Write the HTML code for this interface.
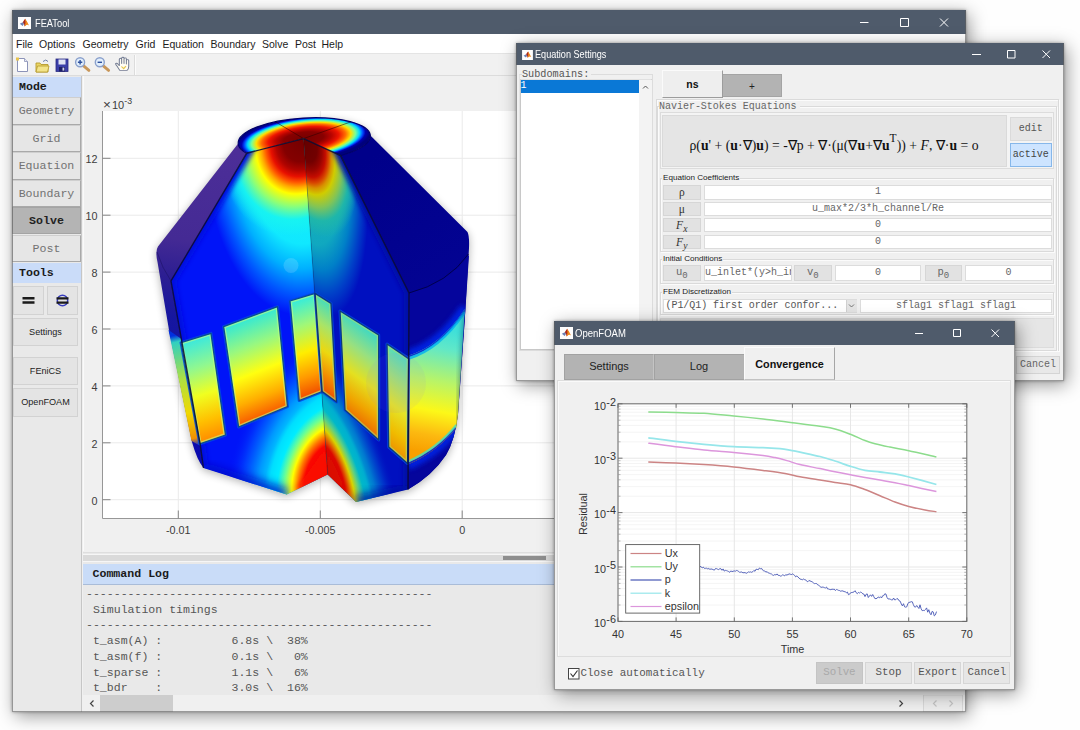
<!DOCTYPE html>
<html>
<head>
<meta charset="utf-8">
<title>FEATool</title>
<style>
*{box-sizing:border-box;margin:0;padding:0}
html,body{width:1080px;height:730px;overflow:hidden;background:#fefefe}
body{position:relative;font-family:"Liberation Sans",sans-serif;font-size:11px;color:#222}
.abs{position:absolute}
.win{position:absolute;background:#f0f0f0;box-shadow:3px 4px 17px rgba(0,0,0,.4),0 0 3px rgba(0,0,0,.35)}
.win::after{content:"";position:absolute;left:0;top:0;right:0;bottom:0;border:1px solid rgba(96,96,96,.6);border-top-color:rgba(79,91,107,.6);pointer-events:none}
.tb{position:absolute;left:0;top:0;right:0;background:#4f5b6b;color:#fff}
.tb .ttl{position:absolute;font-size:10.6px;line-height:12px;white-space:nowrap;transform:scaleX(.84);transform-origin:0 50%}
.ico{position:absolute;width:13px;height:12px;background:#fff}
.ctl{position:absolute;top:0;height:100%}
.mono{font-family:"Liberation Mono",monospace}
.serif{font-family:"Liberation Serif",serif}
.btn{position:absolute;background:#e4e4e4;border:1px solid #d2d2d2;color:#555;text-align:center;white-space:nowrap;overflow:hidden}
.sb{position:absolute;left:0;width:69px;background:#e6e6e6;border:1px solid #cfcfcf;border-right:1px solid #a9a9a9;border-bottom:1px solid #a9a9a9;color:#727272;text-align:center;font-family:"Liberation Mono",monospace;font-size:11.6px;white-space:nowrap}
.lbl{position:absolute;left:0;width:69px;background:#cadcf9;font-family:"Liberation Mono",monospace;font-weight:bold;font-size:11.6px;color:#1a1a1a;padding-left:7px}
.tk{position:absolute;font-size:11.3px;color:#3a3a3a;white-space:nowrap}
.inp{position:absolute;background:#fff;border:1px solid #dcdcdc;font-family:"Liberation Mono",monospace;font-size:10px;color:#666;text-align:center;white-space:nowrap;overflow:hidden}
.cl{position:absolute;background:#e2e2e2;border:1px solid #d6d6d6;text-align:center;color:#555}
.grp{position:absolute;border:1px solid #dadada;box-shadow:inset 1px 1px 0 #fbfbfb,1px 1px 0 #fbfbfb}
.gl{position:absolute;background:#f0f0f0;font-size:8.1px;color:#222;white-space:nowrap;padding:0 1px;line-height:10px}
</style>
</head>
<body>

<!-- ================= MAIN WINDOW ================= -->
<div class="win" id="main" style="left:12px;top:10px;width:954px;height:702px">
  <div class="tb" style="height:24px">
    <svg class="abs" style="left:6px;top:7px" width="13" height="12" viewBox="0 0 13 12"><rect width="13" height="12" fill="#fdfdfd"/><path d="M1.8 6.8l3-1.6 1.3 1.6-1.5 2.2z" fill="#6a7fb4"/><path d="M4.8 5.2q1.6-2.6 2.4-3.4 1 1.6 1.6 4.4l-2.2 3.2-.6-2.6z" fill="#a8281c"/><path d="M7.2 1.8q1.8 2.6 3.8 6.6-1.4-.8-2.6-.4l-1.8 1.4q1.4-3 .6-7.6z" fill="#f08a1c"/></svg>
    <div class="ttl" style="left:22.5px;top:6.5px;transform:scaleX(.875)">FEATool</div>
    <svg class="ctl" style="right:0;width:110px" viewBox="0 0 110 24"><path d="M4 12.5h8.5M44.5 8.5h8v8h-8zM84 8.5l8 8M92 8.5l-8 8" fill="none" stroke="#fff" stroke-width="1"/></svg>
  </div>
  <div class="abs" id="menubar" style="left:0;top:24px;width:954px;height:19px;background:#fff;font-size:10.5px;color:#1c1c1c;line-height:20px">
    <span class="abs" style="left:4px">File</span><span class="abs" style="left:27px">Options</span><span class="abs" style="left:70.5px">Geometry</span><span class="abs" style="left:123.5px">Grid</span><span class="abs" style="left:150.5px">Equation</span><span class="abs" style="left:198.5px">Boundary</span><span class="abs" style="left:250px">Solve</span><span class="abs" style="left:283px">Post</span><span class="abs" style="left:309.5px">Help</span>
  </div>
  <div class="abs" id="toolbar" style="left:0;top:43px;width:954px;height:23px;background:#f1f1f1;border-top:1px solid #e4e4e4;border-bottom:1px solid #dcdcdc">
    <svg class="abs" style="left:0;top:0" width="140" height="22" viewBox="0 0 140 22">
      <!-- new -->
      <path d="M5.5 4.5h7l3 3v10h-10z" fill="#fff" stroke="#8c93b8" stroke-width="1"/><path d="M12.5 4.5v3h3" fill="#e6e9f5" stroke="#8c93b8" stroke-width=".8"/><rect x="4" y="3.5" width="3" height="3" fill="#e8c34a"/>
      <!-- open -->
      <path d="M24 9h4l1 1.5h7v7.5h-12z" fill="#e9d566" stroke="#b59a2c" stroke-width=".9"/><path d="M25.5 12h11.5l-1.5 6h-11.5z" fill="#f3e48a" stroke="#b59a2c" stroke-width=".8"/><path d="M31 7.5q3-3 5 0" fill="none" stroke="#6d7ea8" stroke-width="1"/>
      <!-- save -->
      <rect x="44" y="5" width="12" height="12.5" fill="#3b3fa8" stroke="#2a2c80" stroke-width=".8"/><rect x="46.5" y="5.5" width="7" height="5" fill="#dfe3f3"/><rect x="47" y="13" width="6" height="4.5" fill="#1d1f66"/><rect x="50.5" y="13.6" width="1.8" height="3" fill="#cfd3ea"/>
      <!-- zoom in -->
      <path d="M71.3 11.6l5.6 4.8" stroke="#c8975a" stroke-width="2.9" stroke-linecap="round"/><circle cx="68.1" cy="8.3" r="4.5" fill="#e2effc" stroke="#8aa0cc" stroke-width="1.4"/><path d="M65.9 8.3h4.4M68.1 6.1v4.4" stroke="#2d4f9c" stroke-width="1.4"/>
      <!-- zoom out -->
      <path d="M91 11.6l5.6 4.8" stroke="#c8975a" stroke-width="2.9" stroke-linecap="round"/><circle cx="87.8" cy="8.3" r="4.5" fill="#e2effc" stroke="#8aa0cc" stroke-width="1.4"/><path d="M85.6 8.3h4.4" stroke="#2d4f9c" stroke-width="1.4"/>
      <!-- hand -->
      <g transform="translate(110 10) scale(1.12 1) translate(-110 -10)"><path d="M108,16.4 L105.5,12 Q103.8,10 104.5,9.3 Q105.5,8.8 106.5,10.2 L107.6,11.6 V5.4 Q107.7,4.3 108.7,4.3 Q109.7,4.3 109.7,5.4 V9.5 V4.3 Q109.8,3.3 110.8,3.3 Q111.8,3.3 111.8,4.3 V9.5 V4.9 Q111.9,3.9 112.9,3.9 Q113.9,3.9 113.9,4.9 V10 V6.6 Q114,5.6 115,5.6 Q116,5.6 116,6.6 V12.5 Q116,15 114.5,16.4 Z" fill="#fffdf4" stroke="#717a92" stroke-width=".9" stroke-linejoin="round"/><path d="M109.5 12.5l2 2.2l2-2.6" fill="none" stroke="#e6c84e" stroke-width="1.1"/></g>
      <path d="M122.5 1v20" stroke="#dcdcdc" stroke-width="1"/><path d="M123.5 1v20" stroke="#fbfbfb" stroke-width="1"/>
    </svg>
  </div>
  <div class="abs" id="side" style="left:0;top:66px;width:70px;height:636px;background:#e9e9e9;border-right:1px solid #c6c6c6">
    <div class="lbl" style="top:1px;height:20px;line-height:20px">Mode</div>
    <div class="sb" style="top:21px;height:28px;line-height:26px">Geometry</div>
    <div class="sb" style="top:49px;height:27px;line-height:25px">Grid</div>
    <div class="sb" style="top:76px;height:28px;line-height:26px">Equation</div>
    <div class="sb" style="top:104px;height:27px;line-height:25px">Boundary</div>
    <div class="sb" style="top:131px;height:27px;line-height:25px;background:#b4b4b4;border-color:#a4a4a4;color:#222;font-weight:bold">Solve</div>
    <div class="sb" style="top:159px;height:27px;line-height:25px">Post</div>
    <div class="lbl" style="top:187px;height:20px;line-height:20px">Tools</div>
    <div class="btn" style="left:1px;top:210px;width:31px;height:29px"></div>
    <div class="btn" style="left:35px;top:210px;width:31px;height:29px"></div>
    <svg class="abs" style="left:0;top:208px" width="70" height="34" viewBox="0 0 70 34">
      <path d="M10.5 14.2h12M10.5 18.5h12" stroke="#1a1a1a" stroke-width="2.4"/>
      <circle cx="50.5" cy="16.5" r="5.2" fill="none" stroke="#3a3fc0" stroke-width="1.5"/>
      <path d="M44.5 14.3h12M44.5 18.6h12" stroke="#1a1a1a" stroke-width="2.2"/>
    </svg>
    <div class="btn" style="left:1px;top:242px;width:65px;height:28px;line-height:26px;font-size:9.1px;color:#1c1c1c">Settings</div>
    <div class="btn" style="left:1px;top:281px;width:65px;height:28px;line-height:26px;font-size:9.1px;color:#1c1c1c">FEniCS</div>
    <div class="btn" style="left:1px;top:312px;width:65px;height:29px;line-height:27px;font-size:9.1px;color:#1c1c1c">OpenFOAM</div>
  </div>
  <div class="abs" id="plotpanel" style="left:71px;top:66px;width:883px;height:477px;background:#f0f0f0;border-left:1px solid #fafafa"></div>
  <!--PLOT-START--><svg class="abs" style="left:0;top:0" width="954" height="702" viewBox="12 10 954 702"><style>.t{font-family:"Liberation Sans",sans-serif;font-size:10.8px;fill:#3c3c3c}</style><defs><radialGradient id="gTop" gradientUnits="userSpaceOnUse" cx="0" cy="0" r="67" gradientTransform="translate(303.6 138.6) rotate(-3.4) scale(1 0.325)"><stop offset="0" stop-color="#760000"/><stop offset="0.3" stop-color="#880000"/><stop offset="0.42" stop-color="#b80400"/><stop offset="0.53" stop-color="#ee1400"/><stop offset="0.63" stop-color="#ff6c00"/><stop offset="0.71" stop-color="#ffe000"/><stop offset="0.78" stop-color="#78ff98"/><stop offset="0.84" stop-color="#00d8ff"/><stop offset="0.89" stop-color="#0048ff"/><stop offset="0.93" stop-color="#0000b0"/><stop offset="1" stop-color="#00007c"/></radialGradient><radialGradient id="gLP" gradientUnits="userSpaceOnUse" cx="0" cy="0" r="1" gradientTransform="matrix(138 -40 11.8 160 303.6 137)"><stop offset="0" stop-color="#720000"/><stop offset="0.15" stop-color="#840000"/><stop offset="0.2" stop-color="#b00400"/><stop offset="0.24" stop-color="#e81000"/><stop offset="0.275" stop-color="#ff5800"/><stop offset="0.305" stop-color="#ffa800"/><stop offset="0.345" stop-color="#ffff00"/><stop offset="0.42" stop-color="#8cff78"/><stop offset="0.5" stop-color="#18f4f0" stop-opacity="0.9"/><stop offset="0.6" stop-color="#18f4f0" stop-opacity="0"/></radialGradient><radialGradient id="gLP2" gradientUnits="userSpaceOnUse" cx="0" cy="0" r="1" gradientTransform="matrix(98 -28 13 176 303.6 137)"><stop offset="0" stop-color="#18f4f0"/><stop offset="0.6" stop-color="#10e8ff"/><stop offset="0.74" stop-color="#00b0ff"/><stop offset="0.88" stop-color="#0058ff"/><stop offset="1" stop-color="#0014f8"/></radialGradient><radialGradient id="gRP" gradientUnits="userSpaceOnUse" cx="0" cy="0" r="1" gradientTransform="matrix(90 50 11.8 160 303.6 137)"><stop offset="0" stop-color="#620000"/><stop offset="0.15" stop-color="#720000"/><stop offset="0.2" stop-color="#980400"/><stop offset="0.24" stop-color="#c40c00"/><stop offset="0.275" stop-color="#d84800"/><stop offset="0.305" stop-color="#d89000"/><stop offset="0.345" stop-color="#d0cc00"/><stop offset="0.42" stop-color="#80c458"/><stop offset="0.5" stop-color="#20b8a8" stop-opacity="0.9"/><stop offset="0.6" stop-color="#20b8a8" stop-opacity="0"/></radialGradient><radialGradient id="gRP2" gradientUnits="userSpaceOnUse" cx="0" cy="0" r="1" gradientTransform="matrix(63 35 13 176 303.6 137)"><stop offset="0" stop-color="#20b8a8"/><stop offset="0.6" stop-color="#10a8c0"/><stop offset="0.74" stop-color="#0080c8"/><stop offset="0.88" stop-color="#0040c8"/><stop offset="1" stop-color="#0010c0"/></radialGradient><radialGradient id="gLI" gradientUnits="userSpaceOnUse" cx="0" cy="0" r="1" gradientTransform="matrix(-64 31.4 -6.3 -86 327.7 477)"><stop offset="0" stop-color="#f00000"/><stop offset="0.36" stop-color="#fa0800"/><stop offset="0.46" stop-color="#ff7800"/><stop offset="0.56" stop-color="#ffff00"/><stop offset="0.68" stop-color="#70ff90"/><stop offset="0.8" stop-color="#00ecff"/><stop offset="0.92" stop-color="#00e0ff" stop-opacity="0.9"/><stop offset="1" stop-color="#00d0ff" stop-opacity="0"/></radialGradient><radialGradient id="gLI2" gradientUnits="userSpaceOnUse" cx="0" cy="0" r="1" gradientTransform="matrix(-104 51 -10.3 -140 327.7 477)"><stop offset="0" stop-color="#00ecff"/><stop offset="0.52" stop-color="#00e0ff"/><stop offset="0.68" stop-color="#0098ff"/><stop offset="0.84" stop-color="#0048ff" stop-opacity="0.8"/><stop offset="1" stop-color="#0014f8" stop-opacity="0"/></radialGradient><radialGradient id="gRI" gradientUnits="userSpaceOnUse" cx="0" cy="0" r="1" gradientTransform="matrix(50 48.8 -6.3 -86 327.7 477)"><stop offset="0" stop-color="#d00000"/><stop offset="0.36" stop-color="#dc0800"/><stop offset="0.46" stop-color="#e06800"/><stop offset="0.56" stop-color="#d8d400"/><stop offset="0.68" stop-color="#60d080"/><stop offset="0.8" stop-color="#00b8c8"/><stop offset="0.92" stop-color="#00b0d0" stop-opacity="0.9"/><stop offset="1" stop-color="#00a8d0" stop-opacity="0"/></radialGradient><radialGradient id="gRI2" gradientUnits="userSpaceOnUse" cx="0" cy="0" r="1" gradientTransform="matrix(80 78 -10.3 -140 327.7 477)"><stop offset="0" stop-color="#00b8c8"/><stop offset="0.52" stop-color="#00b0d0"/><stop offset="0.68" stop-color="#0078d0"/><stop offset="0.84" stop-color="#0038cc" stop-opacity="0.8"/><stop offset="1" stop-color="#0010c0" stop-opacity="0"/></radialGradient><linearGradient id="gRO" gradientUnits="userSpaceOnUse" x1="380" y1="150" x2="470" y2="300"><stop offset="0" stop-color="#00008a"/><stop offset="1" stop-color="#040494"/></linearGradient><linearGradient id="gBand" gradientUnits="userSpaceOnUse" x1="447" y1="330" x2="425" y2="452"><stop offset="0" stop-color="#40e0d8"/><stop offset="0.15" stop-color="#60e8c8"/><stop offset="0.42" stop-color="#b8f468"/><stop offset="0.66" stop-color="#fcf818"/><stop offset="0.86" stop-color="#fcb810"/><stop offset="1" stop-color="#f8a000"/></linearGradient><linearGradient id="gLO" gradientUnits="userSpaceOnUse" x1="220" y1="150" x2="180" y2="460"><stop offset="0" stop-color="#4c2e98"/><stop offset="0.3" stop-color="#442a94"/><stop offset="0.42" stop-color="#2c1e92"/><stop offset="0.55" stop-color="#1616a0"/><stop offset="1" stop-color="#0a0ab0"/></linearGradient><linearGradient id="gLBand" gradientUnits="userSpaceOnUse" x1="172" y1="336" x2="196" y2="446"><stop offset="0" stop-color="#0030e0"/><stop offset="0.06" stop-color="#30d0c0"/><stop offset="0.4" stop-color="#b0e040"/><stop offset="0.7" stop-color="#f0d800"/><stop offset="0.93" stop-color="#f09000"/><stop offset="1" stop-color="#0030e0"/></linearGradient><filter id="b1" x="-30%" y="-30%" width="160%" height="160%"><feGaussianBlur stdDeviation="1"/></filter><filter id="b2" x="-30%" y="-30%" width="160%" height="160%"><feGaussianBlur stdDeviation="2.5"/></filter><filter id="b4" x="-30%" y="-30%" width="160%" height="160%"><feGaussianBlur stdDeviation="4"/></filter><filter id="sh" x="-30%" y="-30%" width="160%" height="160%"><feGaussianBlur stdDeviation="4"/></filter><linearGradient id="gr1" gradientUnits="userSpaceOnUse" x1="181" y1="342.6" x2="212.4" y2="439.7"><stop offset="0" stop-color="#38e8e0"/><stop offset="0.28" stop-color="#90f890"/><stop offset="0.55" stop-color="#f0ff20"/><stop offset="0.8" stop-color="#ffc000"/><stop offset="1" stop-color="#ff8a00"/></linearGradient><linearGradient id="gr2" gradientUnits="userSpaceOnUse" x1="223.6" y1="326.7" x2="259.8" y2="418.6"><stop offset="0" stop-color="#30e8d8"/><stop offset="0.28" stop-color="#98f880"/><stop offset="0.55" stop-color="#ffff10"/><stop offset="0.8" stop-color="#ffae00"/><stop offset="1" stop-color="#f85800"/></linearGradient><linearGradient id="gr3l" gradientUnits="userSpaceOnUse" x1="290" y1="301" x2="321.7" y2="392.7"><stop offset="0" stop-color="#30ece0"/><stop offset="0.28" stop-color="#a0f878"/><stop offset="0.55" stop-color="#ffee00"/><stop offset="0.8" stop-color="#ff9800"/><stop offset="1" stop-color="#f04800"/></linearGradient><linearGradient id="gr3r" gradientUnits="userSpaceOnUse" x1="315.5" y1="292.9" x2="271.4" y2="357.8"><stop offset="0" stop-color="#40dcc0"/><stop offset="0.28" stop-color="#a8e468"/><stop offset="0.55" stop-color="#ecd810"/><stop offset="0.8" stop-color="#f48c00"/><stop offset="1" stop-color="#ec5000"/></linearGradient><linearGradient id="gr4" gradientUnits="userSpaceOnUse" x1="342.3" y1="307.9" x2="292" y2="375.3"><stop offset="0" stop-color="#38d8c8"/><stop offset="0.28" stop-color="#98e080"/><stop offset="0.55" stop-color="#e4e020"/><stop offset="0.8" stop-color="#f0a400"/><stop offset="1" stop-color="#ec6800"/></linearGradient><linearGradient id="gr5" gradientUnits="userSpaceOnUse" x1="388" y1="342.8" x2="336.9" y2="409.2"><stop offset="0" stop-color="#50dcc0"/><stop offset="0.28" stop-color="#a0e078"/><stop offset="0.55" stop-color="#e4e428"/><stop offset="0.8" stop-color="#f0bc00"/><stop offset="1" stop-color="#ec9000"/></linearGradient></defs><rect x="102.5" y="111" width="857.5" height="407.5" fill="#fff"/><path d="M102.5,158.3 H960" stroke="#eaeaea" stroke-width="1"/><path d="M102.5,215.2 H960" stroke="#eaeaea" stroke-width="1"/><path d="M102.5,272.1 H960" stroke="#eaeaea" stroke-width="1"/><path d="M102.5,329 H960" stroke="#eaeaea" stroke-width="1"/><path d="M102.5,385.9 H960" stroke="#eaeaea" stroke-width="1"/><path d="M102.5,442.8 H960" stroke="#eaeaea" stroke-width="1"/><path d="M102.5,499.7 H960" stroke="#eaeaea" stroke-width="1"/><path d="M178.3,111 V518.5" stroke="#eaeaea" stroke-width="1"/><path d="M320.3,111 V518.5" stroke="#eaeaea" stroke-width="1"/><path d="M462.2,111 V518.5" stroke="#eaeaea" stroke-width="1"/><path d="M102.5,111 V518.5 H960" fill="none" stroke="#979797" stroke-width="1"/><path d="M102.5,158.3 h8" stroke="#858585" stroke-width="1"/><text x="97.5" y="163.1" text-anchor="end" class="t">12</text><path d="M102.5,215.2 h8" stroke="#858585" stroke-width="1"/><text x="97.5" y="220" text-anchor="end" class="t">10</text><path d="M102.5,272.1 h8" stroke="#858585" stroke-width="1"/><text x="97.5" y="276.9" text-anchor="end" class="t">8</text><path d="M102.5,329 h8" stroke="#858585" stroke-width="1"/><text x="97.5" y="333.8" text-anchor="end" class="t">6</text><path d="M102.5,385.9 h8" stroke="#858585" stroke-width="1"/><text x="97.5" y="390.7" text-anchor="end" class="t">4</text><path d="M102.5,442.8 h8" stroke="#858585" stroke-width="1"/><text x="97.5" y="447.6" text-anchor="end" class="t">2</text><path d="M102.5,499.7 h8" stroke="#858585" stroke-width="1"/><text x="97.5" y="504.5" text-anchor="end" class="t">0</text><path d="M178.3,518.5 v-8" stroke="#858585" stroke-width="1"/><text x="178.3" y="534.3" text-anchor="middle" class="t">-0.01</text><path d="M320.3,518.5 v-8" stroke="#858585" stroke-width="1"/><text x="320.3" y="534.3" text-anchor="middle" class="t">-0.005</text><path d="M462.2,518.5 v-8" stroke="#858585" stroke-width="1"/><text x="462.2" y="534.3" text-anchor="middle" class="t">0</text><text x="103" y="109.3" class="t"><tspan font-size="13.5">×</tspan><tspan x="112" font-size="11">10</tspan><tspan dy="-5.2" font-size="8.8">-3</tspan></text><g id="model"><path d="M238.2,143.4 L238.6,140.6 L240.1,137.7 L242.8,134.9 L246.4,132.2 L251.1,129.5 L256.7,127.1 L263.1,124.9 L270.2,122.9 L277.8,121.2 L286,119.8 L294.4,118.7 L303,118 L311.7,117.7 L320.2,117.8 L328.4,118.2 L336.2,119 L343.5,120.1 L350.1,121.5 L356,123.3 L360.9,125.4 L364.9,127.7 L367.8,130.2 L369.7,132.8 L370.4,135.6 L467.5,232 Q469.5,236 469,248 L464.5,323 L458,414 Q455,440 446,455 Q432,476 408,489.5 L356,502 L327.7,474.4 L286.7,494.5 L203.5,468 Q197,460 192,442 L169,330 L157.5,262 Q155,251 158,246.5 Z" fill="#000" opacity=".3" filter="url(#sh)" transform="translate(0 2)"/><path d="M303.6,138.6 L340.6,155.6 L347.3,153.6 L353.2,151.4 L358.4,149 L362.8,146.4 L366.2,143.8 L368.6,141.1 L370,138.3 L370.4,135.6 L467.5,232 Q469.5,236 469,248 L464.5,323 L458,414 Q455,440 446,455 Q432,476 408,489.5 L409,293 Z" fill="url(#gRO)"/><path d="M409,293 Q448,283 469,255 L464.5,323 L458,414 Q455,440 446,455 Q432,476 408,489.5 Z" fill="#05059c"/><clipPath id="cBand"><path d="M408.6,355.5 Q440,346 464.8,309 L458,414 L456.3,428 Q437,452 408,464.5 Z"/></clipPath><clipPath id="cRO"><path d="M303.6,138.6 L340.6,155.6 L347.3,153.6 L353.2,151.4 L358.4,149 L362.8,146.4 L366.2,143.8 L368.6,141.1 L370,138.3 L370.4,135.6 L467.5,232 Q469.5,236 469,248 L464.5,323 L458,414 Q455,440 446,455 Q432,476 408,489.5 L409,293 Z"/></clipPath><g clip-path="url(#cRO)"><path d="M408.6,354 Q440,344.5 464.8,307.5" fill="none" stroke="#0028e8" stroke-width="9" filter="url(#b2)" opacity=".9"/><path d="M408,466 Q437,453.5 456.3,429.5" fill="none" stroke="#0028e8" stroke-width="8" filter="url(#b2)" opacity=".9"/></g><path d="M408.6,355.5 Q440,346 464.8,309 L458,414 L456.3,428 Q437,452 408,464.5 Z" fill="url(#gBand)"/><g clip-path="url(#cBand)"><path d="M408.6,355.5 Q440,346 464.8,309" fill="none" stroke="#0020d0" stroke-width="3.5" opacity=".9"/><path d="M408.6,358.5 Q440,349 464.8,312" fill="none" stroke="#00b0f0" stroke-width="2.5" opacity=".8"/><path d="M408,464.5 Q437,452 456.3,428" fill="none" stroke="#0020d0" stroke-width="3.5" opacity=".9"/><path d="M408,461.5 Q437,449 456.3,425" fill="none" stroke="#40e0c0" stroke-width="2" opacity=".8"/><path d="M467,300 L459,440" stroke="#003060" stroke-width="7" filter="url(#b2)" opacity=".4"/></g><path d="M303.6,138.6 L246.8,153.2 L244.3,151.7 L242.2,150.2 L240.6,148.6 L239.3,146.9 L238.5,145.2 L238.2,143.4 L158,246.5 Q155,251 157.5,262 L169,330 L192,442 Q197,460 203.5,468 L200,443 L171,281 Z" fill="url(#gLO)"/><path d="M168.5,330 L191.5,441 L200.5,446 L181.5,339 Z" fill="url(#gLBand)"/><ellipse cx="304.3" cy="139.5" rx="66.2" ry="21.5" transform="rotate(-3.4 304.3 139.5)" fill="url(#gTop)" stroke="#00006c" stroke-width="1.2"/><path d="M303.6,138.6 L275.2,121.7 M303.6,138.6 L351,121.8" stroke="#300000" stroke-width=".8" opacity=".7"/><clipPath id="cLF"><polygon points="303.6,138.6 246.8,153.2 171,281 200,443 203.5,468 286.7,494.5 327.7,474.4 329.3,475.6 305.2,139.2"/></clipPath><g clip-path="url(#cLF)"><polygon points="303.6,138.6 246.8,153.2 171,281 200,443 203.5,468 286.7,494.5 327.7,474.4" fill="#0014f8"/><rect x="150" y="120" width="200" height="290" fill="url(#gLP2)"/><rect x="150" y="120" width="200" height="290" fill="url(#gLP)"/><path d="M255.9,137.8 L171,281 L200,443 L203.5,468" fill="none" stroke="#0010e0" stroke-width="10" filter="url(#b2)"/><rect x="190" y="330" width="150" height="180" fill="url(#gLI2)"/><rect x="190" y="360" width="150" height="150" fill="url(#gLI)"/><polygon points="327.7,474.4 296,490 326,447" fill="#fa0c00" filter="url(#b2)"/><path d="M203.5,468 L286.7,494.5" fill="none" stroke="#0008c8" stroke-width="12" filter="url(#b4)" opacity=".8"/></g><clipPath id="cRF"><polygon points="303.6,138.6 340.6,155.6 409,293 408,489.5 356,502 327.7,474.4"/></clipPath><g clip-path="url(#cRF)"><polygon points="303.6,138.6 340.6,155.6 409,293 408,489.5 356,502 327.7,474.4" fill="#0010c0"/><rect x="290" y="120" width="140" height="290" fill="url(#gRP2)"/><rect x="290" y="120" width="140" height="290" fill="url(#gRP)"/><path d="M332.4,139.1 L409,293 L408,489" fill="none" stroke="#0008a8" stroke-width="10" filter="url(#b2)"/><rect x="310" y="330" width="110" height="180" fill="url(#gRI2)"/><rect x="310" y="360" width="110" height="150" fill="url(#gRI)"/><polygon points="327.7,474.4 348,494 326,447" fill="#dc0800" filter="url(#b2)"/><path d="M356,502 L408,489.5" fill="none" stroke="#0008a0" stroke-width="12" filter="url(#b4)" opacity=".8"/></g><polygon points="181,342.6 211,333.4 225.5,435 199.8,443.8" fill="#00a0e8" stroke="#0048e8" stroke-width="3" stroke-linejoin="round" opacity=".85"/><clipPath id="cr1"><polygon points="181,342.6 211,333.4 225.5,435 199.8,443.8"/></clipPath><polygon points="181,342.6 211,333.4 225.5,435 199.8,443.8" fill="url(#gr1)"/><polygon points="181,342.6 211,333.4 225.5,435 199.8,443.8" fill="none" stroke="#c0ff80" stroke-width="4" opacity=".6" clip-path="url(#cr1)"/><polygon points="181,342.6 211,333.4 225.5,435 199.8,443.8" fill="none" stroke="#0a4a90" stroke-width="1.3" stroke-linejoin="round"/><polygon points="223.6,326.7 277.5,306.7 287.5,406.5 238.6,427" fill="#00a0e8" stroke="#0048e8" stroke-width="3" stroke-linejoin="round" opacity=".85"/><clipPath id="cr2"><polygon points="223.6,326.7 277.5,306.7 287.5,406.5 238.6,427"/></clipPath><polygon points="223.6,326.7 277.5,306.7 287.5,406.5 238.6,427" fill="url(#gr2)"/><polygon points="223.6,326.7 277.5,306.7 287.5,406.5 238.6,427" fill="none" stroke="#c0ff80" stroke-width="4" opacity=".6" clip-path="url(#cr2)"/><polygon points="223.6,326.7 277.5,306.7 287.5,406.5 238.6,427" fill="none" stroke="#0a4a90" stroke-width="1.3" stroke-linejoin="round"/><polygon points="290,301 315.1,293.4 322.2,391.5 299.2,400.5" fill="#00a0e8" stroke="#0048e8" stroke-width="3" stroke-linejoin="round" opacity=".85"/><clipPath id="cr3l"><polygon points="290,301 315.1,293.4 322.2,391.5 299.2,400.5"/></clipPath><polygon points="290,301 315.1,293.4 322.2,391.5 299.2,400.5" fill="url(#gr3l)"/><polygon points="290,301 315.1,293.4 322.2,391.5 299.2,400.5" fill="none" stroke="#c0ff80" stroke-width="4" opacity=".6" clip-path="url(#cr3l)"/><polygon points="290,301 315.1,293.4 322.2,391.5 299.2,400.5" fill="none" stroke="#0a4a90" stroke-width="1.3" stroke-linejoin="round"/><polygon points="315.1,293.4 331,303.4 336.5,402 322.2,391.5" fill="#00a0e8" stroke="#0048e8" stroke-width="3" stroke-linejoin="round" opacity=".85"/><clipPath id="cr3r"><polygon points="315.1,293.4 331,303.4 336.5,402 322.2,391.5"/></clipPath><polygon points="315.1,293.4 331,303.4 336.5,402 322.2,391.5" fill="url(#gr3r)"/><polygon points="315.1,293.4 331,303.4 336.5,402 322.2,391.5" fill="none" stroke="#a8e070" stroke-width="4" opacity=".6" clip-path="url(#cr3r)"/><polygon points="315.1,293.4 331,303.4 336.5,402 322.2,391.5" fill="none" stroke="#0a3a80" stroke-width="1.3" stroke-linejoin="round"/><polygon points="340,311 378.7,335 378.7,440 345,410" fill="#00a0e8" stroke="#0048e8" stroke-width="3" stroke-linejoin="round" opacity=".85"/><clipPath id="cr4"><polygon points="340,311 378.7,335 378.7,440 345,410"/></clipPath><polygon points="340,311 378.7,335 378.7,440 345,410" fill="url(#gr4)"/><polygon points="340,311 378.7,335 378.7,440 345,410" fill="none" stroke="#a8e070" stroke-width="4" opacity=".6" clip-path="url(#cr4)"/><polygon points="340,311 378.7,335 378.7,440 345,410" fill="none" stroke="#0a3a80" stroke-width="1.3" stroke-linejoin="round"/><polygon points="387,344 408.6,358.6 407.6,463.5 388.7,447" fill="#00a0e8" stroke="#0048e8" stroke-width="3" stroke-linejoin="round" opacity=".85"/><clipPath id="cr5"><polygon points="387,344 408.6,358.6 407.6,463.5 388.7,447"/></clipPath><polygon points="387,344 408.6,358.6 407.6,463.5 388.7,447" fill="url(#gr5)"/><polygon points="387,344 408.6,358.6 407.6,463.5 388.7,447" fill="none" stroke="#a8e070" stroke-width="4" opacity=".6" clip-path="url(#cr5)"/><polygon points="387,344 408.6,358.6 407.6,463.5 388.7,447" fill="none" stroke="#0a3a80" stroke-width="1.3" stroke-linejoin="round"/><path d="M303.6,138.6 L246.8,153.2 L171,281 L200,443 L203.5,468" fill="none" stroke="#0a0a30" stroke-width="1.4" opacity=".85"/><path d="M303.6,138.6 L340.6,155.6 L409,293 L408,489.5" fill="none" stroke="#0a0a30" stroke-width="1.4" opacity=".85"/><path d="M409,293 Q448,283 468.5,254" fill="none" stroke="#00003c" stroke-width="1" opacity=".8"/><path d="M171,281 Q162,268 157,252" fill="none" stroke="#1a1060" stroke-width="1" opacity=".5"/><path d="M303.6,138.6 L327.7,474.4" fill="none" stroke="#200000" stroke-width=".8" opacity=".3"/><circle cx="291" cy="265.5" r="7.5" fill="#fff" opacity=".15"/><circle cx="396" cy="383" r="30" fill="#8868ff" opacity=".07"/></g></svg><!--PLOT-END-->
  <div class="abs" id="cmd" style="left:71px;top:541px;width:883px;height:161px;background:#e9e9e9">
    <div class="abs" style="left:0;top:0;width:883px;height:2px;background:#f0f0f0;border-bottom:1px solid #dedede"></div>
    <div class="abs" style="left:0;top:3px;width:883px;height:8px;background:#dadada;border-top:1px solid #f6f6f6;border-bottom:1px solid #f6f6f6"></div>
    <div class="abs" style="left:420px;top:5px;width:43px;height:4px;background:#8e8e8e"></div>
    <div class="abs mono" style="left:0;top:13px;width:883px;height:21px;background:#c9dcf8;border-bottom:1px solid #a9bcd8;font-weight:bold;font-size:11.6px;line-height:20px;padding-left:9.5px;color:#1a1a1a">Command Log</div>
    <pre class="abs mono" style="left:3px;top:35px;font-size:11.56px;line-height:15.7px;color:#565656;margin:0">--------------------------------------------------
 Simulation timings
--------------------------------------------------
 t_asm(A) :          6.8s \  38%
 t_asm(f) :          0.1s \   0%
 t_sparse :          1.1s \   6%
 t_bdr    :          3.0s \  16%</pre>
    <div class="abs" style="left:0;top:144px;width:883px;height:17px;background:#f0f0f0"></div>
    <div class="abs" style="left:17px;top:144px;width:73px;height:17px;background:#cdcdcd"></div>
    <svg class="abs" style="left:0;top:144px" width="883" height="17" viewBox="0 0 883 17">
      <path d="M10.5 5.5l-3 3 3 3" fill="none" stroke="#444" stroke-width="1.2"/>
      <path d="M816.5 5.5l3 3-3 3" fill="none" stroke="#444" stroke-width="1.2"/>
      <rect x="840.5" y="0" width="39" height="17" fill="#ececec" stroke="#d8d8d8"/>
      <path d="M853.5 5.5l-3 3 3 3M866.5 5.5l3 3-3 3" fill="none" stroke="#c4c4c4" stroke-width="1.2"/>
    </svg>
  </div>
</div>

<!-- ================= EQUATION SETTINGS ================= -->
<div class="win" id="eq" style="left:516px;top:43px;width:548px;height:338px">
  <div class="tb" style="height:22px">
    <svg class="abs" style="left:5.5px;top:6.5px" width="11" height="10" viewBox="0 0 13 12"><rect width="13" height="12" fill="#fdfdfd"/><path d="M1.8 6.8l3-1.6 1.3 1.6-1.5 2.2z" fill="#6a7fb4"/><path d="M4.8 5.2q1.6-2.6 2.4-3.4 1 1.6 1.6 4.4l-2.2 3.2-.6-2.6z" fill="#a8281c"/><path d="M7.2 1.8q1.8 2.6 3.8 6.6-1.4-.8-2.6-.4l-1.8 1.4q1.4-3 .6-7.6z" fill="#f08a1c"/></svg>
    <div class="ttl" style="left:18.5px;top:5px;transform:scaleX(.86)">Equation Settings</div>
    <svg class="ctl" style="right:0;width:110px" viewBox="0 0 110 22"><path d="M18 11.5h9M53.5 7.5h7.5v7.5h-7.5zM88.5 7.5l7.5 7.5M96 7.5l-7.5 7.5" fill="none" stroke="#fff" stroke-width="1"/></svg>
  </div>
  <!-- subdomains -->
  <div class="abs" style="left:2.5px;top:31px;width:134.5px;height:277px;border:1px solid #dcdcdc;border-left-color:#e4e4e4"></div>
  <div class="abs mono" style="left:6px;top:26px;font-size:10.2px;line-height:12px;background:#f0f0f0;color:#555;padding-right:2px">Subdomains:</div>
  <div class="abs" style="left:4px;top:36px;width:132px;height:270.5px;background:#fff;border:1px solid #c8c8c8;border-top-color:#e0e0e0"></div>
  <div class="abs mono" style="left:4.5px;top:37px;width:118.5px;height:12.5px;background:#0a78d6;color:#fff;font-size:10px;line-height:12px">1</div>
  <div class="abs" style="left:123px;top:37px;width:12.5px;height:269px;background:#f3f3f3"></div>
  <svg class="abs" style="left:123px;top:38px" width="13" height="12" viewBox="0 0 13 12"><path d="M4 7.5l2.5-2.5 2.5 2.5" fill="none" stroke="#555" stroke-width="1"/></svg>
  <!-- tabs -->
  <div class="abs" style="left:206px;top:31px;width:60px;height:23px;background:#b3b3b3;border:1px solid #a4a4a4;font-size:10px;text-align:center;line-height:24px;color:#222">+</div>
  <div class="abs" style="left:146px;top:27px;width:61px;height:28px;background:#eeeeee;border:1px solid #fafafa;border-right:1px solid #9c9c9c;border-bottom:1px solid #9c9c9c;font-size:10.5px;font-weight:bold;text-align:center;line-height:26px;color:#111">ns</div>
  <!-- outer tab panel -->
  <div class="grp" style="left:139.5px;top:55.5px;width:403.5px;height:252px"></div>
  <div class="grp" style="left:141px;top:62.5px;width:400px;height:245px"></div>
  <div class="abs mono" style="left:143px;top:57.5px;font-size:10px;line-height:12px;background:#f0f0f0;color:#666;padding-right:3px;letter-spacing:-.02px">Navier-Stokes Equations</div>
  <!-- equation box -->
  <div class="abs" style="left:143.5px;top:69px;width:394px;height:57px;border:1px solid #dcdcdc;background:#f4f4f4"></div>
  <div class="abs" style="left:146px;top:71.5px;width:344.5px;height:52.5px;background:#e5e5e5;border:1px solid #dadada"></div>
  <div class="abs serif" id="eqn" style="left:173.5px;top:93.5px;font-size:13.7px;line-height:18px;color:#111;white-space:nowrap;letter-spacing:.03px">&rho;(<b>u</b>' + (<b>u</b>&middot;&nabla;)<b>u</b>) = -&nabla;p + &nabla;&middot;(&mu;(&nabla;<b>u</b>+&nabla;<b>u</b><sup style="font-size:11.5px;line-height:0;vertical-align:8px">T</sup>)) + <i>F</i>, &nabla;&middot;<b>u</b> = o</div>
  <div class="btn mono" style="left:494px;top:74px;width:41.5px;height:23.5px;line-height:21px;font-size:10px;color:#555;background:#e6e6e6;border-color:#dadada">edit</div>
  <div class="btn mono" style="left:494px;top:100px;width:41.5px;height:23.5px;line-height:21px;font-size:10px;color:#444;background:#cde4ff;border-color:#86b7ea">active</div>
  <!-- coefficients -->
  <div class="grp" style="left:143.5px;top:135px;width:394.5px;height:73.5px"></div>
  <div class="gl" style="left:146px;top:129.5px">Equation Coefficients</div>
  <div class="cl serif" style="left:146.5px;top:142px;width:38.5px;height:14.5px;line-height:12.5px;font-size:11.5px;color:#333;">&rho;</div><div class="inp" style="left:188px;top:142px;width:348px;height:14.5px;line-height:12.5px">1</div><div class="cl serif" style="left:146.5px;top:158.5px;width:38.5px;height:14px;line-height:12px;font-size:11.5px;color:#333;">&mu;</div><div class="inp" style="left:188px;top:158.5px;width:348px;height:14px;line-height:12px">u_max*2/3*h_channel/Re</div><div class="cl serif" style="left:146.5px;top:175px;width:38.5px;height:14px;line-height:12px;font-size:11.5px;color:#333;font-style:italic">F<sub>x</sub></div><div class="inp" style="left:188px;top:175px;width:348px;height:14px;line-height:12px">0</div><div class="cl serif" style="left:146.5px;top:191.5px;width:38.5px;height:14.5px;line-height:12.5px;font-size:11.5px;color:#333;font-style:italic">F<sub>y</sub></div><div class="inp" style="left:188px;top:191.5px;width:348px;height:14.5px;line-height:12.5px">0</div>
  <!-- initial conditions -->
  <div class="grp" style="left:143.5px;top:215.5px;width:394.5px;height:25.5px"></div>
  <div class="gl" style="left:146px;top:210.5px">Initial Conditions</div>
  <div class="cl mono" style="left:146.5px;top:222px;width:38.5px;height:16px;line-height:13px;font-size:10.5px;color:#666">u<sub style="font-size:9px">0</sub></div>
  <div class="inp" style="left:188px;top:222px;width:87.5px;height:16px;line-height:14px;text-align:left;padding-left:0;font-size:10px">u_inlet*(y&gt;h_inlet)</div>
  <div class="cl mono" style="left:277.5px;top:222px;width:38.5px;height:16px;line-height:13px;font-size:10.5px;color:#666">v<sub style="font-size:9px">0</sub></div>
  <div class="inp" style="left:319px;top:222px;width:86px;height:16px;line-height:14px">0</div>
  <div class="cl mono" style="left:408.5px;top:222px;width:37.5px;height:16px;line-height:13px;font-size:10.5px;color:#666">p<sub style="font-size:9px">0</sub></div>
  <div class="inp" style="left:449px;top:222px;width:87px;height:16px;line-height:14px">0</div>
  <!-- FEM -->
  <div class="grp" style="left:143.5px;top:249px;width:394.5px;height:23px"></div>
  <div class="gl" style="left:146px;top:244px">FEM Discretization</div>
  <div class="inp" style="left:147px;top:255.5px;width:194px;height:14px;line-height:12px;text-align:left;padding-left:1.5px;color:#555;letter-spacing:-.05px">(P1/Q1) first order confor...</div>
  <div class="abs" style="left:329.5px;top:256.5px;width:11px;height:12px;background:#e4e4e4;border-left:1px solid #d0d0d0"></div>
  <svg class="abs" style="left:330px;top:257px" width="11" height="12" viewBox="0 0 11 12"><path d="M3 4.5l2.5 2.5 2.5-2.5" fill="none" stroke="#666" stroke-width=".9"/></svg>
  <div class="inp" style="left:344px;top:255.5px;width:192px;height:14px;line-height:12px">sflag1 sflag1 sflag1</div>
  <div class="abs" style="left:143.5px;top:275px;width:394.5px;height:30px;background:#e6e6e6;border:1px solid #dcdcdc"></div>
  <div class="btn mono" style="left:500px;top:313px;width:44px;height:18px;line-height:16px;font-size:10px;color:#666;background:#e8e8e8;border-color:#d4d4d4">Cancel</div>
</div>

<!-- ================= OPENFOAM ================= -->
<div class="win" id="of" style="left:554px;top:321px;width:461px;height:369px">
  <div class="tb" style="height:24px">
    <svg class="abs" style="left:6px;top:6px" width="13" height="12" viewBox="0 0 13 12"><rect width="13" height="12" fill="#fdfdfd"/><path d="M1.8 6.8l3-1.6 1.3 1.6-1.5 2.2z" fill="#6a7fb4"/><path d="M4.8 5.2q1.6-2.6 2.4-3.4 1 1.6 1.6 4.4l-2.2 3.2-.6-2.6z" fill="#a8281c"/><path d="M7.2 1.8q1.8 2.6 3.8 6.6-1.4-.8-2.6-.4l-1.8 1.4q1.4-3 .6-7.6z" fill="#f08a1c"/></svg>
    <div class="ttl" style="left:21px;top:6px;transform:scaleX(.9)">OpenFOAM</div>
    <svg class="ctl" style="right:0;width:110px" viewBox="0 0 110 24"><path d="M10 12.5h8M48.5 8.5h7v7h-7zM86.5 8.5l7.5 7.5M94 8.5l-7.5 7.5" fill="none" stroke="#fff" stroke-width="1"/></svg>
  </div>
  <!--OF-START--><div class="abs" style="left:10px;top:33px;width:90px;height:26px;background:#b3b3b3;border:1px solid #a2a2a2;border-right-color:#c4c4c4;font-size:11px;line-height:23px;text-align:center;color:#1e1e1e">Settings</div><div class="abs" style="left:99.5px;top:33px;width:91px;height:26px;background:#b3b3b3;border:1px solid #a2a2a2;font-size:11px;line-height:23px;text-align:center;color:#1e1e1e">Log</div><div class="abs" style="left:190px;top:26px;width:91px;height:33px;background:#f0f0f0;border:1px solid #fbfbfb;border-right:1px solid #a6a6a6;border-bottom:1px solid #c2c2c2;font-size:10.8px;font-weight:bold;line-height:32px;text-align:center;color:#111">Convergence</div><div class="abs" style="left:2.5px;top:59px;width:454px;height:277px;background:#f0f0f0;border:1px solid #dddddd;box-shadow:inset 1px 1px 0 #fafafa"></div><svg class="abs" style="left:0;top:0" width="461" height="369" viewBox="554 321 461 369"><style>.c{font-family:"Liberation Sans",sans-serif;font-size:10.8px;fill:#333}</style><rect x="618" y="403.8" width="348.8" height="217.6" fill="#fff"/><path d="M618,441.8 H966.8" stroke="#f1f1f1" stroke-width=".8"/><path d="M618,441.8 h2.5M966.8,441.8 h-2.5" stroke="#999" stroke-width=".7"/><path d="M618,432.2 H966.8" stroke="#f1f1f1" stroke-width=".8"/><path d="M618,432.2 h2.5M966.8,432.2 h-2.5" stroke="#999" stroke-width=".7"/><path d="M618,425.4 H966.8" stroke="#f1f1f1" stroke-width=".8"/><path d="M618,425.4 h2.5M966.8,425.4 h-2.5" stroke="#999" stroke-width=".7"/><path d="M618,420.2 H966.8" stroke="#f1f1f1" stroke-width=".8"/><path d="M618,420.2 h2.5M966.8,420.2 h-2.5" stroke="#999" stroke-width=".7"/><path d="M618,415.9 H966.8" stroke="#f1f1f1" stroke-width=".8"/><path d="M618,415.9 h2.5M966.8,415.9 h-2.5" stroke="#999" stroke-width=".7"/><path d="M618,412.2 H966.8" stroke="#f1f1f1" stroke-width=".8"/><path d="M618,412.2 h2.5M966.8,412.2 h-2.5" stroke="#999" stroke-width=".7"/><path d="M618,409.1 H966.8" stroke="#f1f1f1" stroke-width=".8"/><path d="M618,409.1 h2.5M966.8,409.1 h-2.5" stroke="#999" stroke-width=".7"/><path d="M618,406.3 H966.8" stroke="#f1f1f1" stroke-width=".8"/><path d="M618,406.3 h2.5M966.8,406.3 h-2.5" stroke="#999" stroke-width=".7"/><path d="M618,496.2 H966.8" stroke="#f1f1f1" stroke-width=".8"/><path d="M618,496.2 h2.5M966.8,496.2 h-2.5" stroke="#999" stroke-width=".7"/><path d="M618,486.6 H966.8" stroke="#f1f1f1" stroke-width=".8"/><path d="M618,486.6 h2.5M966.8,486.6 h-2.5" stroke="#999" stroke-width=".7"/><path d="M618,479.8 H966.8" stroke="#f1f1f1" stroke-width=".8"/><path d="M618,479.8 h2.5M966.8,479.8 h-2.5" stroke="#999" stroke-width=".7"/><path d="M618,474.6 H966.8" stroke="#f1f1f1" stroke-width=".8"/><path d="M618,474.6 h2.5M966.8,474.6 h-2.5" stroke="#999" stroke-width=".7"/><path d="M618,470.3 H966.8" stroke="#f1f1f1" stroke-width=".8"/><path d="M618,470.3 h2.5M966.8,470.3 h-2.5" stroke="#999" stroke-width=".7"/><path d="M618,466.6 H966.8" stroke="#f1f1f1" stroke-width=".8"/><path d="M618,466.6 h2.5M966.8,466.6 h-2.5" stroke="#999" stroke-width=".7"/><path d="M618,463.5 H966.8" stroke="#f1f1f1" stroke-width=".8"/><path d="M618,463.5 h2.5M966.8,463.5 h-2.5" stroke="#999" stroke-width=".7"/><path d="M618,460.7 H966.8" stroke="#f1f1f1" stroke-width=".8"/><path d="M618,460.7 h2.5M966.8,460.7 h-2.5" stroke="#999" stroke-width=".7"/><path d="M618,550.6 H966.8" stroke="#f1f1f1" stroke-width=".8"/><path d="M618,550.6 h2.5M966.8,550.6 h-2.5" stroke="#999" stroke-width=".7"/><path d="M618,541 H966.8" stroke="#f1f1f1" stroke-width=".8"/><path d="M618,541 h2.5M966.8,541 h-2.5" stroke="#999" stroke-width=".7"/><path d="M618,534.2 H966.8" stroke="#f1f1f1" stroke-width=".8"/><path d="M618,534.2 h2.5M966.8,534.2 h-2.5" stroke="#999" stroke-width=".7"/><path d="M618,529 H966.8" stroke="#f1f1f1" stroke-width=".8"/><path d="M618,529 h2.5M966.8,529 h-2.5" stroke="#999" stroke-width=".7"/><path d="M618,524.7 H966.8" stroke="#f1f1f1" stroke-width=".8"/><path d="M618,524.7 h2.5M966.8,524.7 h-2.5" stroke="#999" stroke-width=".7"/><path d="M618,521 H966.8" stroke="#f1f1f1" stroke-width=".8"/><path d="M618,521 h2.5M966.8,521 h-2.5" stroke="#999" stroke-width=".7"/><path d="M618,517.9 H966.8" stroke="#f1f1f1" stroke-width=".8"/><path d="M618,517.9 h2.5M966.8,517.9 h-2.5" stroke="#999" stroke-width=".7"/><path d="M618,515.1 H966.8" stroke="#f1f1f1" stroke-width=".8"/><path d="M618,515.1 h2.5M966.8,515.1 h-2.5" stroke="#999" stroke-width=".7"/><path d="M618,605 H966.8" stroke="#f1f1f1" stroke-width=".8"/><path d="M618,605 h2.5M966.8,605 h-2.5" stroke="#999" stroke-width=".7"/><path d="M618,595.4 H966.8" stroke="#f1f1f1" stroke-width=".8"/><path d="M618,595.4 h2.5M966.8,595.4 h-2.5" stroke="#999" stroke-width=".7"/><path d="M618,588.6 H966.8" stroke="#f1f1f1" stroke-width=".8"/><path d="M618,588.6 h2.5M966.8,588.6 h-2.5" stroke="#999" stroke-width=".7"/><path d="M618,583.4 H966.8" stroke="#f1f1f1" stroke-width=".8"/><path d="M618,583.4 h2.5M966.8,583.4 h-2.5" stroke="#999" stroke-width=".7"/><path d="M618,579.1 H966.8" stroke="#f1f1f1" stroke-width=".8"/><path d="M618,579.1 h2.5M966.8,579.1 h-2.5" stroke="#999" stroke-width=".7"/><path d="M618,575.4 H966.8" stroke="#f1f1f1" stroke-width=".8"/><path d="M618,575.4 h2.5M966.8,575.4 h-2.5" stroke="#999" stroke-width=".7"/><path d="M618,572.3 H966.8" stroke="#f1f1f1" stroke-width=".8"/><path d="M618,572.3 h2.5M966.8,572.3 h-2.5" stroke="#999" stroke-width=".7"/><path d="M618,569.5 H966.8" stroke="#f1f1f1" stroke-width=".8"/><path d="M618,569.5 h2.5M966.8,569.5 h-2.5" stroke="#999" stroke-width=".7"/><path d="M618,403.8 H966.8" stroke="#e7e7e7" stroke-width="1"/><path d="M618,458.2 H966.8" stroke="#e7e7e7" stroke-width="1"/><path d="M618,512.6 H966.8" stroke="#e7e7e7" stroke-width="1"/><path d="M618,567 H966.8" stroke="#e7e7e7" stroke-width="1"/><path d="M618,621.4 H966.8" stroke="#e7e7e7" stroke-width="1"/><path d="M618,403.8 V621.4" stroke="#e7e7e7" stroke-width="1"/><path d="M676.1,403.8 V621.4" stroke="#e7e7e7" stroke-width="1"/><path d="M734.3,403.8 V621.4" stroke="#e7e7e7" stroke-width="1"/><path d="M792.4,403.8 V621.4" stroke="#e7e7e7" stroke-width="1"/><path d="M850.5,403.8 V621.4" stroke="#e7e7e7" stroke-width="1"/><path d="M908.7,403.8 V621.4" stroke="#e7e7e7" stroke-width="1"/><path d="M966.8,403.8 V621.4" stroke="#e7e7e7" stroke-width="1"/><path d="M648.3,461.9 C652.8,462.1 666.2,462.7 675.5,463.1 C684.8,463.6 694.3,464 704,464.6 C713.7,465.2 723.9,465.9 733.8,466.9 C743.6,467.9 754.5,469.3 763,470.4 C771.5,471.5 778.8,472.4 785,473.5 C791.2,474.6 794.2,475.7 800,476.8 C805.8,477.9 814.2,479.1 820,480 C825.8,480.9 829.9,481.6 835,482.4 C840.1,483.2 845.5,483.5 850.5,484.7 C855.5,485.9 860.1,487.7 865,489.5 C869.9,491.3 875,493.6 880,495.7 C885,497.8 890.2,500.2 895,502 C899.8,503.8 903.8,505.1 908.8,506.4 C913.8,507.7 920.4,509.1 925,510 C929.6,510.9 934.5,511.4 936.4,511.7" fill="none" stroke="#cc8484" stroke-width="1.5" stroke-linejoin="round"/><path d="M648.3,412 C652.8,412.1 666.2,412.3 675.5,412.5 C684.8,412.7 694.3,412.7 704,413.3 C713.7,413.9 723.9,415.1 733.8,416 C743.6,416.9 753.2,417.9 763,419 C772.8,420.1 783,421.5 792.5,422.7 C802,423.9 812.9,425.2 820,426.3 C827.1,427.4 829.9,427.7 835,429 C840.1,430.3 845.5,432.4 850.5,434.3 C855.5,436.2 860.9,438.9 865,440.5 C869.1,442.1 870.8,442.6 875,443.7 C879.2,444.8 884.4,445.9 890,447.1 C895.6,448.3 901,449.1 908.8,450.7 C916.5,452.3 931.8,455.9 936.4,456.9" fill="none" stroke="#8cdc8c" stroke-width="1.5" stroke-linejoin="round"/><path d="M648.3,437.8 C652.8,438.4 666.2,440.3 675.5,441.4 C684.8,442.5 694.3,443.5 704,444.4 C713.7,445.3 723.9,446.2 733.8,446.7 C743.6,447.2 755.3,447.3 763,447.6 C770.7,447.9 775.5,448.3 780,448.7 C784.5,449.1 786.7,449.6 790,450.2 C793.3,450.8 795,451.1 800,452.1 C805,453.2 814.2,455 820,456.5 C825.8,458 829.9,459.4 835,461 C840.1,462.6 845.5,464.7 850.5,466.3 C855.5,467.9 860.1,469.4 865,470.4 C869.9,471.3 875,471.4 880,472 C885,472.6 890.2,473 895,473.8 C899.8,474.6 901.9,475.2 908.8,477 C915.6,478.8 931.8,483.2 936.4,484.5" fill="none" stroke="#96e6ea" stroke-width="1.8" stroke-linejoin="round"/><path d="M648.3,443.2 C652.8,443.8 666.2,445.6 675.5,446.7 C684.8,447.8 694.3,449 704,450 C713.7,451 723.9,451.7 733.8,452.6 C743.6,453.5 756.1,454.8 763,455.6 C769.9,456.4 771,456.8 775,457.6 C779,458.4 782.8,459.4 787,460.6 C791.2,461.8 794.5,463.3 800,464.6 C805.5,465.9 814.2,467.4 820,468.6 C825.8,469.8 829.9,470.7 835,471.7 C840.1,472.7 845.5,473.7 850.5,474.7 C855.5,475.7 860.1,476.7 865,477.6 C869.9,478.5 875,479.1 880,480 C885,480.9 890.2,481.8 895,482.7 C899.8,483.6 901.9,484.1 908.8,485.6 C915.6,487.1 931.8,490.6 936.4,491.6" fill="none" stroke="#dc96dc" stroke-width="1.5" stroke-linejoin="round"/><polyline points="700,566.6 701.1,566.6 702.2,568 703.3,567.1 704.4,568.4 705.5,568.3 706.6,568 707.7,569.1 708.8,568.4 709.9,569.4 711,568.9 712.1,569.2 713.2,569.6 714.3,570.2 715.4,568.6 716.5,568.6 717.6,569.2 718.7,569.6 719.8,568.7 720.9,568.7 722,570.3 723.1,568.9 724.2,571.1 725.3,570.4 726.4,570.6 727.5,571 728.6,571.5 729.7,572.3 730.8,570.9 731.9,571.5 733,571.4 734.1,570.8 735.2,571.3 736.3,570.5 737.4,570.7 738.5,571.2 739.6,572.4 740.7,572.1 741.8,572 742.9,572.8 744,572.7 745.1,572.6 746.2,573.3 747.3,572.9 748.4,571.8 749.5,572.2 750.6,571.9 751.7,572.3 752.8,571.7 753.9,570.4 755,571.3 756.1,569.2 757.2,569.4 758.3,569.7 759.4,568 760.5,568.7 761.6,568.4 762.7,570.2 763.8,570.9 764.9,571.1 766,572.2 767.1,571.6 768.2,572.9 769.3,573.2 770.4,573.7 771.5,574 772.6,575 773.7,575.4 774.8,574.5 775.9,575 777,573.9 778.1,575.3 779.2,575.3 780.3,576.1 781.4,575.9 782.5,574.9 783.6,575.2 784.7,575.9 785.8,574.5 786.9,575.2 788,574.4 789.1,574.1 790.2,573.8 791.3,575 792.4,573.8 793.5,574.5 794.6,575.4 795.7,576.9 796.8,575.9 797.9,577.1 799,577.9 800.1,579.1 801.2,579.3 802.3,579.8 803.4,579 804.5,579.6 805.6,579.8 806.7,581.2 807.8,581.8 808.9,580.5 810,580.9 811.1,581.4 812.2,581.8 813.3,582.8 814.4,583.6 815.5,583.5 816.6,583.5 817.7,584.9 818.8,585.3 819.9,586.3 821,587.4 822.1,587.1 823.2,587.1 824.3,587.6 825.4,588 826.5,587 827.6,589 828.7,589 829.8,589.5 830.9,589.7 832,589.1 833.1,589.4 834.2,589.1 835.3,590.5 836.4,589.5 837.5,589.8 838.6,590.4 839.7,590.6 840.8,591.3 841.9,590.8 843,591 844.1,591.6 845.2,591.7 846.3,592.7 847.4,592 848.5,594.7 849.6,594.2 850.7,592.7 851.8,592.5 852.9,592.3 854,591.9 855.1,590.7 856.2,592.7 857.3,593.7 858.4,592.4 859.5,593 860.6,592.1 861.7,592.6 862.8,593.9 863.9,594.1 865,596.6 866.1,594.3 867.2,593.9 868.3,597.5 869.4,596.1 870.5,594.8 871.6,596.4 872.7,594.5 873.8,596.7 874.9,598.6 876,598.6 877.1,598.3 878.2,596.9 879.3,597.8 880.4,596.7 881.5,598 882.6,595.8 883.7,595.6 884.8,593.8 885.9,594 887,597.4 888.1,599 889.2,598.9 890.3,599.2 891.4,599.8 892.5,600 893.6,598 894.7,599.9 895.8,599.7 896.9,598.5 898,599 899.1,600.8 900.2,601.2 901.3,604 902.4,605.9 903.5,603.7 904.6,606.8 905.7,607.2 906.8,606.8 907.9,603.4 909,602.4 910.1,602.2 911.2,601.7 912.3,601.8 913.4,604.7 914.5,606.9 915.6,607.1 916.7,605.5 917.8,607.1 918.9,608.5 920,604.8 921.1,608.7 922.2,610.7 923.3,610.4 924.4,610.6 925.5,609.4 926.6,607.9 927.7,612.2 928.8,609.7 929.9,613.2 931,614.8 932.1,611.4 933.2,611.9 934.3,615.9 935.4,614.9 936.5,611.6" fill="none" stroke="#4656b4" stroke-width=".9" stroke-linejoin="round"/><rect x="618" y="403.8" width="348.8" height="217.6" fill="none" stroke="#6c6c6c" stroke-width="1"/><path d="M618,403.8 h4.5M966.8,403.8 h-4.5" stroke="#666" stroke-width=".9"/><text x="606" y="409.6" text-anchor="end" class="c">10</text><text x="606.3" y="405.6" class="c" font-size="7.5">-2</text><path d="M618,458.2 h4.5M966.8,458.2 h-4.5" stroke="#666" stroke-width=".9"/><text x="606" y="464" text-anchor="end" class="c">10</text><text x="606.3" y="460" class="c" font-size="7.5">-3</text><path d="M618,512.6 h4.5M966.8,512.6 h-4.5" stroke="#666" stroke-width=".9"/><text x="606" y="518.4" text-anchor="end" class="c">10</text><text x="606.3" y="514.4" class="c" font-size="7.5">-4</text><path d="M618,567 h4.5M966.8,567 h-4.5" stroke="#666" stroke-width=".9"/><text x="606" y="572.8" text-anchor="end" class="c">10</text><text x="606.3" y="568.8" class="c" font-size="7.5">-5</text><path d="M618,621.4 h4.5M966.8,621.4 h-4.5" stroke="#666" stroke-width=".9"/><text x="606" y="627.2" text-anchor="end" class="c">10</text><text x="606.3" y="623.2" class="c" font-size="7.5">-6</text><path d="M618,621.4 v-4M618,403.8 v4" stroke="#666" stroke-width=".9"/><text x="618" y="637.5" text-anchor="middle" class="c">40</text><path d="M676.1,621.4 v-4M676.1,403.8 v4" stroke="#666" stroke-width=".9"/><text x="676.1" y="637.5" text-anchor="middle" class="c">45</text><path d="M734.3,621.4 v-4M734.3,403.8 v4" stroke="#666" stroke-width=".9"/><text x="734.3" y="637.5" text-anchor="middle" class="c">50</text><path d="M792.4,621.4 v-4M792.4,403.8 v4" stroke="#666" stroke-width=".9"/><text x="792.4" y="637.5" text-anchor="middle" class="c">55</text><path d="M850.5,621.4 v-4M850.5,403.8 v4" stroke="#666" stroke-width=".9"/><text x="850.5" y="637.5" text-anchor="middle" class="c">60</text><path d="M908.7,621.4 v-4M908.7,403.8 v4" stroke="#666" stroke-width=".9"/><text x="908.7" y="637.5" text-anchor="middle" class="c">65</text><path d="M966.8,621.4 v-4M966.8,403.8 v4" stroke="#666" stroke-width=".9"/><text x="966.8" y="637.5" text-anchor="middle" class="c">70</text><text x="792.5" y="653" text-anchor="middle" class="c" font-size="11.9">Time</text><text transform="translate(586.5 514) rotate(-90)" text-anchor="middle" class="c" font-size="11.9">Residual</text><rect x="625.7" y="544.6" width="74" height="68.5" fill="#fff" stroke="#5a5a5a" stroke-width=".9"/><path d="M630.5,553.5 h31" stroke="#cc8484" stroke-width="1.2"/><text x="664.8" y="556.8" class="c" font-size="8.4">Ux</text><path d="M630.5,566.8 h31" stroke="#8cdc8c" stroke-width="1.2"/><text x="664.8" y="570" class="c" font-size="8.4">Uy</text><path d="M630.5,580 h31" stroke="#4656b4" stroke-width="1.2"/><text x="664.8" y="583.3" class="c" font-size="8.4">p</text><path d="M630.5,593.2 h31" stroke="#96e6ea" stroke-width="1.2"/><text x="664.8" y="596.5" class="c" font-size="8.4">k</text><path d="M630.5,606.5 h31" stroke="#dc96dc" stroke-width="1.2"/><text x="664.8" y="609.8" class="c" font-size="8.4">epsilon</text></svg><svg class="abs" style="left:13.5px;top:346.5px" width="12" height="12" viewBox="0 0 12 12"><rect x=".5" y=".5" width="10.5" height="10.5" fill="#fff" stroke="#444" stroke-width="1"/><path d="M2.5 5.5l2.5 3 4.5-6" fill="none" stroke="#333" stroke-width="1.1"/></svg><div class="abs mono" style="left:26.5px;top:345px;font-size:10.9px;line-height:14px;color:#555;white-space:nowrap">Close automatically</div><div class="btn mono" style="left:262px;top:341px;width:46.8px;height:21.5px;line-height:19px;font-size:10.8px;color:#555;background:#e6e6e6;border-color:#d6d6d6;background:#cbcbcb;border-color:#c4c4c4;color:#a9a9a9">Solve</div><div class="btn mono" style="left:311px;top:341px;width:47px;height:21.5px;line-height:19px;font-size:10.8px;color:#555;background:#e6e6e6;border-color:#d6d6d6;">Stop</div><div class="btn mono" style="left:360px;top:341px;width:47.4px;height:21.5px;line-height:19px;font-size:10.8px;color:#555;background:#e6e6e6;border-color:#d6d6d6;">Export</div><div class="btn mono" style="left:409.3px;top:341px;width:47.2px;height:21.5px;line-height:19px;font-size:10.8px;color:#555;background:#e6e6e6;border-color:#d6d6d6;">Cancel</div><!--OF-END-->
</div>

</body>
</html>
